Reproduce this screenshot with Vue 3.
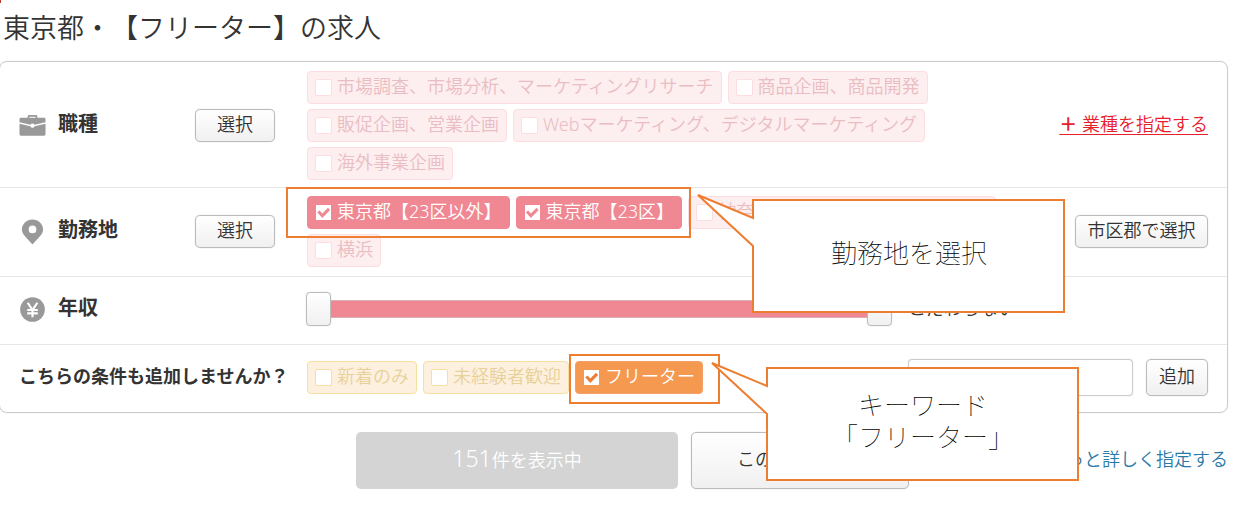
<script setup>
import { ref } from 'vue'

const jobs = ref([
    { id: 'research', name: '市場調査、市場分析、マーケティングリサーチ', checked: false },
    { id: 'product', name: '商品企画、商品開発', checked: false },
    { id: 'sales', name: '販促企画、営業企画', checked: false },
    { id: 'web', name: 'Webマーケティング、デジタルマーケティング', checked: false },
    { id: 'overseas', name: '海外事業企画', checked: false },
])

const areas = ref([
    { id: 'tokyo-other', name: '東京都【23区以外】', checked: true },
    { id: 'tokyo-23', name: '東京都【23区】', checked: true },
    { id: 'kanagawa', name: '神奈川県【横浜市・川崎市除く】', checked: false },
    { id: 'yokohama', name: '横浜', checked: false },
])

const extras = ref([
    { id: 'new', name: '新着のみ', checked: false },
    { id: 'beginner', name: '未経験者歓迎', checked: false },
    { id: 'freeter', name: 'フリーター', checked: true },
])

const salaryMin = ref(0)
const salaryMax = ref(100)
const keyword = ref('')

const callouts = [
    { id: 'area', lines: ['勤務地を選択'] },
    { id: 'keyword', lines: ['キーワード', '「フリーター」'] },
]
</script>

<template>
    <div class="page">
        <h1 class="title">東京都・【フリーター】の求人</h1>

        <form class="panel" @submit.prevent>
            <!-- Job type -->
            <div class="row">
                <div class="row-label">
                    <svg class="icon" viewBox="0 0 28 28" aria-hidden="true">
                        <path d="M9 6.500V4.500Q9 3 10.500 3h7Q19 3 19 4.500v2h-1.800V4.800h-6.400v1.700z" fill="#999" />
                        <path d="M2 6h24q1.500 0 1.500 1.500v3L16 13.300a2.200 2.200 0 0 0-4 0L.5 10.500v-3Q.5 6 2 6z" fill="#999" />
                        <path d="M.5 12.200l11.300 2.600a2.300 2.300 0 0 0 4.400 0l11.300-2.600V23q0 1.500-1.500 1.500H2Q.5 24.500.5 23z" fill="#999" />
                    </svg>
                    <span>職種</span>
                </div>
                <button type="button" class="btn btn-select">選択</button>
                <div class="chips">
                    <label v-for="item in jobs" :key="item.id" class="chip" :class="{ on: item.checked }">
                        <input v-model="item.checked" type="checkbox" class="check" />
                        <span>{{ item.name }}</span>
                    </label>
                </div>
                <a href="#" class="add-link"><span class="plus">＋ </span>業種を指定する</a>
            </div>

            <!-- Work location -->
            <div class="row row-area">
                <div class="row-label">
                    <svg class="icon" viewBox="0 0 28 28" aria-hidden="true">
                        <path
                            d="M14 1.500C7.800 1.500 3 6.200 3 12c0 5 4.500 8 11 15.500C20.500 20 25 17 25 12 25 6.200 20.200 1.500 14 1.500zm0 6.300a4 4 0 1 1 0 8 4 4 0 0 1 0-8z"
                            fill="#999"
                            fill-rule="evenodd"
                        />
                    </svg>
                    <span>勤務地</span>
                </div>
                <button type="button" class="btn btn-select">選択</button>
                <div class="chips">
                    <label v-for="item in areas" :key="item.id" class="chip" :class="{ on: item.checked }">
                        <input v-model="item.checked" type="checkbox" class="check" />
                        <span>{{ item.name }}</span>
                    </label>
                </div>
                <button type="button" class="btn btn-city">市区郡で選択</button>
            </div>

            <!-- Salary -->
            <div class="row row-salary">
                <div class="row-label">
                    <svg class="icon" viewBox="0 0 28 28" aria-hidden="true">
                        <circle cx="14" cy="14" r="12.800" fill="#999" />
                        <path d="M9 7l5 7.500L19 7M14 14v8M8.500 14.500h11M8.500 18h11" fill="none" stroke="#fff" stroke-width="2.200" />
                    </svg>
                    <span>年収</span>
                </div>
                <div class="salary">
                    <div class="slider">
                        <div class="track"></div>
                        <input v-model="salaryMin" type="range" class="range" aria-label="年収の下限" />
                        <input v-model="salaryMax" type="range" class="range" aria-label="年収の上限" />
                    </div>
                    <span class="salary-value">こだわらない</span>
                </div>
            </div>

            <!-- Suggested conditions -->
            <div class="row row-extra">
                <div class="extra-label">こちらの条件も追加しませんか？</div>
                <div class="chips">
                    <label v-for="item in extras" :key="item.id" class="chip chip-yellow" :class="{ on: item.checked }">
                        <input v-model="item.checked" type="checkbox" class="check" />
                        <span>{{ item.name }}</span>
                    </label>
                </div>
                <input v-model="keyword" type="text" class="keyword" aria-label="キーワード" />
                <button type="submit" class="btn btn-add">追加</button>
            </div>
        </form>

        <div class="actions">
            <button type="button" class="btn-count" disabled><span class="count">151</span>件を表示中</button>
            <button type="button" class="btn btn-save">この条件を保存</button>
            <a href="#" class="detail-link">もっと詳しく指定する</a>
        </div>

        <!-- Annotations over the form -->
        <div class="frame frame-area"></div>
        <div class="frame frame-keyword"></div>
        <div v-for="item in callouts" :key="item.id" class="callout" :class="'callout-' + item.id">
            <svg class="callout-shape" viewBox="0 0 370 122" aria-hidden="true">
                <path d="M57 7H368V119H57V53L2 2L57 25Z" fill="#fff" stroke="#ed7d31" stroke-width="2" />
            </svg>
            <p class="callout-text">
                <span v-for="line in item.lines" :key="line">{{ line }}</span>
            </p>
        </div>
    </div>
</template>

<style>
body { background: #fff; }
</style>

<style scoped>
.page {
    position: relative;
    padding: 8px 23px 22px 0;
    font-family: "Noto Sans", "Noto Sans CJK JP", sans-serif;
    font-size: 18px;
    font-weight: 350;
    line-height: 24px;
    text-spacing-trim: space-all;
    color: #333;
    overflow: hidden;
}
.page::before {
    content: ''; position: absolute; top: 0; left: 0;
    width: 1px; height: 3px; background: #c0392b;
}

.title { margin: 0 0 13px; padding-left: 3px; font-size: 27px; font-weight: 350; line-height: 40px; }

.panel {
    margin-left: -1px;
    border: 1px solid #ccc;
    border-radius: 8px;
    box-shadow: 0 0 1px #ccc;
}

.row {
    display: flex; align-items: center; box-sizing: border-box;
    padding: 9px 19px 7px;
    border-bottom: 1px solid #e6e6e6;
}
.row-area { padding: 8px 19px 9px; }
.row-salary { min-height: 68px; padding: 7px 19px 10px; }
.row-extra { min-height: 67px; padding: 7px 19px 9px; border-bottom: none; }

.row-label {
    display: flex; align-items: center; gap: 12px;
    width: 176px; flex-shrink: 0;
    font-size: 20px; font-weight: 700;
}
.row-label span { padding-bottom: 3px; }
.icon { width: 27px; height: 27px; }
.extra-label { width: 288px; flex-shrink: 0; font-weight: 700; white-space: nowrap; padding-bottom: 3px; }

.btn {
    box-sizing: border-box; flex-shrink: 0;
    height: 33px; padding: 0 0 3px;
    border: 1px solid #bbb; border-radius: 5px;
    background: linear-gradient(#fff, #f0f0f0);
    box-shadow: 0 0 1px #bbb;
    font: inherit; color: #333; line-height: 24px;
    cursor: pointer;
}
.btn-select { width: 80px; margin-right: 32px; }
.btn-city { width: 133px; }
.btn-add { width: 62px; height: 37px; margin-left: 13px; }

.chips { display: flex; flex-wrap: wrap; gap: 5px 6px; flex: 1; min-width: 0; }

.chip {
    display: flex; align-items: center; gap: 5px; box-sizing: border-box;
    height: 33px; padding: 0 7px;
    border: 1px solid #fddde0; border-radius: 4px;
    background: #fdeef0; color: #eabdc2;
    white-space: nowrap; cursor: pointer;
}
.chip span { padding-bottom: 3px; }
.chip.on { background: #f08894; border-color: #ee8591; color: #fff; }
.chip-yellow { background: #fdf0df; border-color: #f8dfa0; color: #e8d199; }
.chip-yellow.on { background: #f59850; border-color: #f5a066; }

.check {
    appearance: none; box-sizing: border-box; flex-shrink: 0;
    width: 17px; height: 17px; margin: 0;
    border: 1px solid #fddde0; border-radius: 2px;
    background: #fff; cursor: pointer;
}
.chip-yellow .check { border-color: #f8dfa0; }
.chip.on .check { border-color: transparent; border-radius: 0; background-clip: padding-box; }
.check:checked::before {
    content: ''; display: block; width: 15px; height: 15px;
    background: #f08894;
    clip-path: polygon(8% 48%, 24% 36%, 42% 56%, 80% 18%, 94% 34%, 42% 86%);
}
.chip-yellow .check:checked::before { background: #ed7d31; }

.add-link { flex-shrink: 0; padding-bottom: 3px; color: #e8202c; text-decoration: underline; text-underline-offset: 3px; white-space: nowrap; }
.plus { font-weight: 700; }

.salary { display: flex; align-items: center; gap: 16px; flex: 1; margin-left: 111px; }
.slider { display: grid; align-items: center; width: 586px; }
.salary-value { padding-bottom: 3px; }
.track {
    grid-area: 1 / 1; height: 16px; margin: 0 12px;
    background: #f08894; border: 1px solid #d9b0b5;
}
.range {
    grid-area: 1 / 1; appearance: none;
    width: 100%; height: 34px; margin: 0;
    background: none; pointer-events: none;
}
.range::-webkit-slider-thumb {
    appearance: none; box-sizing: border-box;
    width: 25px; height: 34px;
    border: 1px solid #bbb; border-radius: 4px;
    background: linear-gradient(#fff, #f0f0f0);
    box-shadow: 0 0 1px #bbb;
    pointer-events: auto; cursor: pointer;
}

.keyword {
    box-sizing: border-box; width: 225px; height: 37px; padding: 0 8px;
    border: 1px solid #ccc; border-radius: 4px; box-shadow: 0 0 1px #ccc;
    font: inherit; color: #333;
}

.actions { display: flex; align-items: center; gap: 13px; margin-top: 19px; padding-left: 356px; }
.btn-count {
    width: 322px; height: 57px; padding: 0 0 3px;
    border: none; border-radius: 5px; background: #d4d4d4;
    font: inherit; color: #fff;
}
.count { font-size: 23px; }
.btn-save { width: 218px; height: 57px; }
.detail-link { margin-left: auto; padding-bottom: 3px; color: #2a7aa8; text-decoration: none; white-space: nowrap; }

.frame { position: absolute; box-sizing: border-box; border: 2px solid #ed7d31; pointer-events: none; }
.frame-area { left: 286px; top: 187px; width: 405px; height: 51px; }
.frame-keyword { left: 569px; top: 354px; width: 151px; height: 50px; }

.callout { position: absolute; width: 370px; height: 122px; }
.callout-area { left: 696px; top: 193px; }
.callout-keyword { left: 710px; top: 361px; }
.callout-shape { position: absolute; inset: 0; width: 370px; height: 122px; }
.callout-text {
    position: relative; box-sizing: border-box;
    display: flex; flex-direction: column; align-items: center; justify-content: center;
    height: 100%; margin: 0; padding: 0 0 0 56px;
    font-family: "Liberation Sans", "Noto Sans CJK JP", sans-serif;
    font-size: 26px; font-weight: 100; line-height: 32px; color: #000;
}
</style>
